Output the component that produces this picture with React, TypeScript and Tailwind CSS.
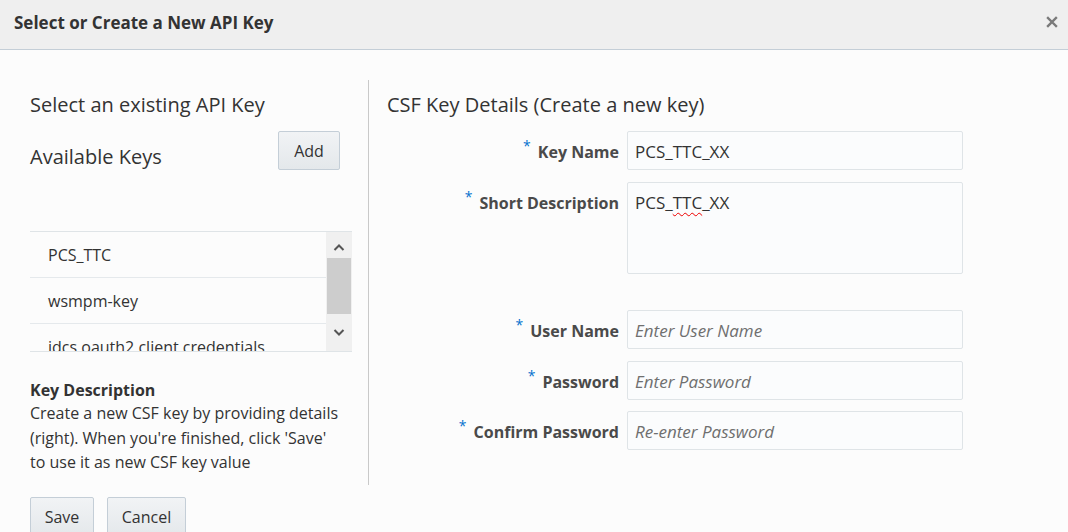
import React from "react";

const Star = () => (
  <span className="text-[#0572ce] text-[14px] font-normal relative -top-[5px] mr-[7px]">*</span>
);

type FieldProps = { label: string; value?: string; placeholder?: string; tall?: boolean; squiggle?: boolean };

const Field = ({ label, value, placeholder, tall, squiggle }: FieldProps) => (
  <div className="flex items-start">
    <div className="w-[240px] pr-[8px] flex justify-end pt-[9px] text-[16px] font-bold text-[#4a4a4a]">
      <Star />
      {label}
    </div>
    <div
      className={
        "w-[336px] border border-[#dfe4e7] rounded-[2px] bg-[#fbfcfd] px-[7px] pt-[7px] text-[17px] " +
        (tall ? "h-[92px]" : "h-[39px]")
      }
    >
      {value ? (
        squiggle ? (
          <span className="text-[#333]">
            PCS_
            <span className="underline decoration-wavy decoration-[#e00] decoration-1 underline-offset-[3px]">TTC</span>
            _XX
          </span>
        ) : (
          <span className="text-[#333]">{value}</span>
        )
      ) : (
        <span className="italic text-[#6f6f6f]">{placeholder}</span>
      )}
    </div>
  </div>
);

const btn =
  "border border-[#c4ced7] rounded-[2px] bg-gradient-to-b from-[#f1f3f5] to-[#e4e8eb] text-[16px] text-[#333]";

const App = () => {
  return (
    <div
      className="w-[1068px] h-[532px] overflow-hidden bg-[#fcfcfc] text-[#333]"
      style={{ fontFamily: "'Open Sans', 'Noto Sans', sans-serif" }}
    >
      <div className="h-[50px] bg-[#efefef] border-b border-[#c4ced7] flex items-center justify-between pl-[14px] pr-[10px]">
        <h1 className="text-[17px] font-bold text-[#333] -mt-[4px]">Select or Create a New API Key</h1>
        <svg className="w-[12px] h-[12px] -mt-[6px]" viewBox="0 0 12 12" stroke="#7a7a7a" strokeWidth="2.4" strokeLinecap="square">
          <path d="M2 2 L10 10 M10 2 L2 10" />
        </svg>
      </div>

      <div className="flex mt-[30px]">
        <div className="w-[369px] h-[405px] pl-[30px] pr-[16px] border-r border-[#c9c9c9] shrink-0">
          <p className="text-[20px] leading-[24px] mt-[13px]">Select an existing API Key</p>
          <div className="flex items-start justify-between pr-[12px] mt-[14px]">
            <p className="text-[20px] leading-[24px] mt-[14px]">Available Keys</p>
            <button className={"w-[62px] h-[39px] " + btn}>Add</button>
          </div>

          <div className="mt-[61px] h-[121px] border-t border-b border-[#dfe4e7] flex overflow-hidden">
            <div className="flex-1 text-[16px]">
              {["PCS_TTC", "wsmpm-key", "idcs oauth2 client credentials"].map((k) => (
                <div key={k} className="h-[46px] border-b border-[#e5e9ec] pl-[18px] pt-[11px] whitespace-nowrap">
                  {k}
                </div>
              ))}
            </div>
            <div className="w-[26px] bg-[#f0f0f0] flex flex-col items-center">
              <svg className="w-[12px] h-[8px] mt-[11px]" viewBox="0 0 12 8" fill="none" stroke="#555" strokeWidth="2">
                <path d="M1.5 7 L6 2.5 L10.5 7" />
              </svg>
              <div className="w-[24px] h-[56px] bg-[#cdcdcd] mt-[7px]" />
              <svg className="w-[12px] h-[8px] mt-[15px]" viewBox="0 0 12 8" fill="none" stroke="#555" strokeWidth="2">
                <path d="M1.5 1 L6 5.5 L10.5 1" />
              </svg>
            </div>
          </div>

          <p className="text-[16px] font-bold mt-[26px] leading-[24px]">Key Description</p>
          <p className="w-[315px] text-[16px] leading-[24.5px] text-[#333] -mt-[1px]">
            Create a new CSF key by providing details (right). When you're finished, click 'Save' to use it as new CSF
            key value
          </p>
        </div>

        <div className="pl-[18px] flex-1">
          <p className="text-[20px] leading-[24px] mt-[13px]">CSF Key Details (Create a new key)</p>
          <div className="mt-[14px] flex flex-col">
            <Field label="Key Name" value="PCS_TTC_XX" />
            <div className="mt-[12px]">
              <Field label="Short Description" value="PCS_TTC_XX" tall squiggle />
            </div>
            <div className="mt-[36px]">
              <Field label="User Name" placeholder="Enter User Name" />
            </div>
            <div className="mt-[12px]">
              <Field label="Password" placeholder="Enter Password" />
            </div>
            <div className="mt-[11px]">
              <Field label="Confirm Password" placeholder="Re-enter Password" />
            </div>
          </div>
        </div>
      </div>

      <div className="flex gap-[13px] pl-[30px] mt-[12px]">
        <button className={"w-[64px] h-[40px] " + btn}>Save</button>
        <button className={"w-[79px] h-[40px] " + btn}>Cancel</button>
      </div>
    </div>
  );
};

export default App;
